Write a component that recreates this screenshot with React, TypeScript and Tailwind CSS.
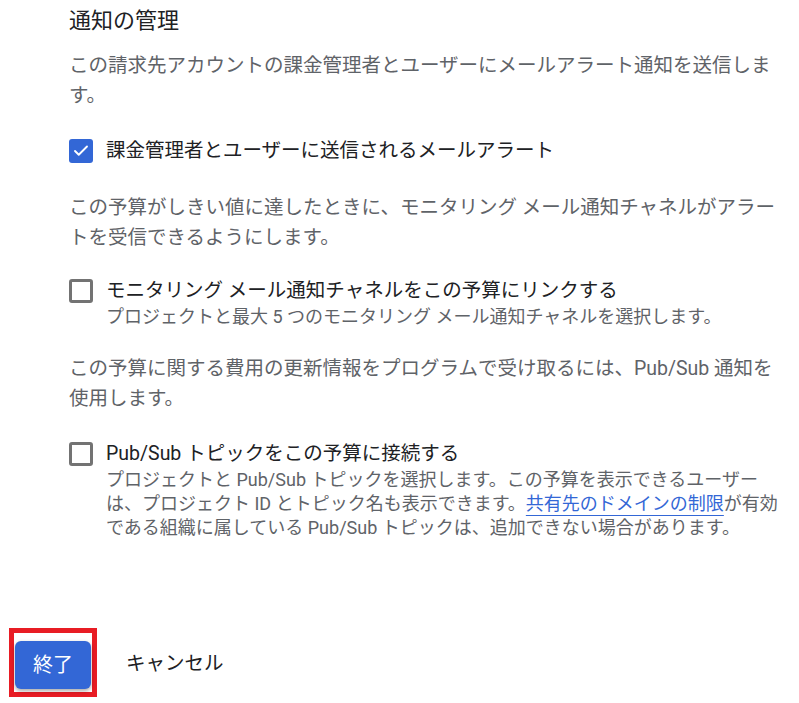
import { Check } from "lucide-react"

interface OptionProps {
  checked: boolean
  label: string
  children?: React.ReactNode
}

function Option({ checked, label, children }: OptionProps) {
  return (
    <div className="flex gap-[13px]">
      {checked ? (
        <div className="mt-[2px] flex h-[24px] w-[24px] shrink-0 items-center justify-center rounded-[3px] bg-[#3367d6]">
          <Check className="h-[18px] w-[18px] text-white" strokeWidth={2.5} />
        </div>
      ) : (
        <div className="mt-[2px] h-[24px] w-[24px] shrink-0 rounded-[3px] border-[3px] border-[#737373]" />
      )}
      <div>
        <div className="text-[19.5px] leading-[28px] text-[#202124] whitespace-nowrap">{label}</div>
        {children && (
          <div className="text-[18px] leading-[24px] text-[#5f6368] whitespace-nowrap">{children}</div>
        )}
      </div>
    </div>
  )
}

export default function App() {
  return (
    <div className="relative h-[703px] w-[799px] overflow-hidden bg-white font-['Roboto','Noto_Sans_CJK_JP',sans-serif]">
      <div className="pl-[69px] pt-[6px]">
        <h2 className="text-[22px] leading-[30px] text-[#202124]">通知の管理</h2>

        <p className="mt-[15px] text-[19.5px] leading-[30px] text-[#5f6368] whitespace-nowrap">
          この請求先アカウントの課金管理者とユーザーにメールアラート通知を送信しま
          <br />
          す。
        </p>

        <div className="mt-[26px]">
          <Option checked label="課金管理者とユーザーに送信されるメールアラート" />
        </div>

        <p className="mt-[28px] text-[19.5px] leading-[30px] text-[#5f6368] whitespace-nowrap">
          この予算がしきい値に達したときに、モニタリング メール通知チャネルがアラー
          <br />
          トを受信できるようにします。
        </p>

        <div className="mt-[24px]">
          <Option checked={false} label="モニタリング メール通知チャネルをこの予算にリンクする">
            プロジェクトと最大 5 つのモニタリング メール通知チャネルを選択します。
          </Option>
        </div>

        <p className="mt-[25px] text-[19.5px] leading-[30px] text-[#5f6368] whitespace-nowrap">
          この予算に関する費用の更新情報をプログラムで受け取るには、Pub/Sub 通知を
          <br />
          使用します。
        </p>

        <div className="mt-[26px]">
          <Option checked={false} label="Pub/Sub トピックをこの予算に接続する">
            プロジェクトと Pub/Sub トピックを選択します。この予算を表示できるユーザー
            <br />
            は、プロジェクト ID とトピック名も表示できます。
            <a className="text-[#3367d6] underline decoration-1 underline-offset-[5px]">共有先のドメインの制限</a>
            が有効
            <br />
            である組織に属している Pub/Sub トピックは、追加できない場合があります。
          </Option>
        </div>
      </div>

      <div className="mt-[88px] flex items-center">
        <div className="ml-[9px] border-[5px] border-[#e81c24] px-[1px] pt-[8px] pb-[3px]">
          <button className="flex h-[48px] w-[76px] items-center justify-center rounded-[6px] bg-[#3367d6] text-[20px] text-white shadow-[0_2px_4px_rgba(0,0,0,0.35)]">
            終了
          </button>
        </div>
        <button className="ml-[29px] mt-[2px] text-[19.5px] text-[#202124]">キャンセル</button>
      </div>
    </div>
  )
}
